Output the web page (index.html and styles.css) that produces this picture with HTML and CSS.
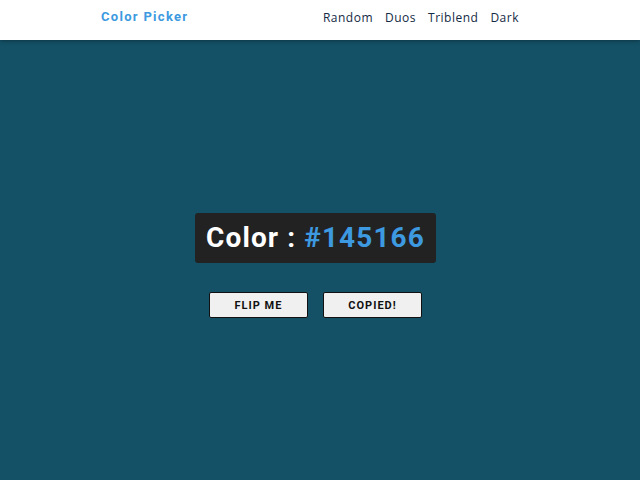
FILE: index.html
```html
<!DOCTYPE html>
<html>
<head>
<meta charset="utf-8">
<link rel="stylesheet" href="styles.css">
</head>
<body>
<nav class="navbar">
  <div class="brand">Color Picker</div>
  <ul class="links">
    <li>Random</li>
    <li>Duos</li>
    <li>Triblend</li>
    <li>Dark</li>
  </ul>
</nav>
<main class="main">
  <div class="color-box">Color : <span class="hex">#145166</span></div>
  <div class="buttons">
    <button class="btn">FLIP ME</button>
    <button class="btn">COPIED!</button>
  </div>
</main>
</body>
</html>
```
FILE: styles.css
```css
html, body {
  margin: 0;
  padding: 0;
  height: 100%;
}
body {
  background: #145166;
  font-family: Roboto, "Liberation Sans", sans-serif;
  display: flex;
  flex-direction: column;
}
.navbar {
  background: #fff;
  height: 40px;
  display: flex;
  align-items: center;
  justify-content: space-between;
  padding: 0 121px 0 101px;
  box-shadow: 0 1px 4px rgba(0,0,0,0.35);
  position: relative;
  z-index: 1;
}
.brand {
  color: #3d9ae0;
  font-weight: 700;
  font-size: 13px;
  letter-spacing: 1.3px;
  margin-top: -7px;
}
.links {
  list-style: none;
  margin: 0;
  padding: 0;
  display: flex;
  gap: 12px;
  font-family: "Open Sans", sans-serif;
  font-size: 12px;
  letter-spacing: 0.5px;
  color: #142a44;
  margin-top: -5px;
}
.main {
  flex: 1;
  display: flex;
  flex-direction: column;
  align-items: center;
  padding-top: 173px;
}
.color-box {
  background: #222222;
  color: #fff;
  font-weight: 700;
  font-size: 28px;
  letter-spacing: 1.1px;
  padding: 0 11px;
  height: 50px;
  line-height: 50px;
  border-radius: 3px;
  margin-left: -9px;
}
.hex {
  color: #3d9ae0;
}
.buttons {
  display: flex;
  gap: 15px;
  margin-top: 29px;
  margin-left: -9px;
}
.btn {
  width: 99px;
  height: 26px;
  background: #f0f0f0;
  border: 1px solid #111;
  border-radius: 2px;
  font-family: Roboto, sans-serif;
  font-weight: 700;
  font-size: 11px;
  letter-spacing: 1px;
  color: #111;
  padding: 0;
}
```
